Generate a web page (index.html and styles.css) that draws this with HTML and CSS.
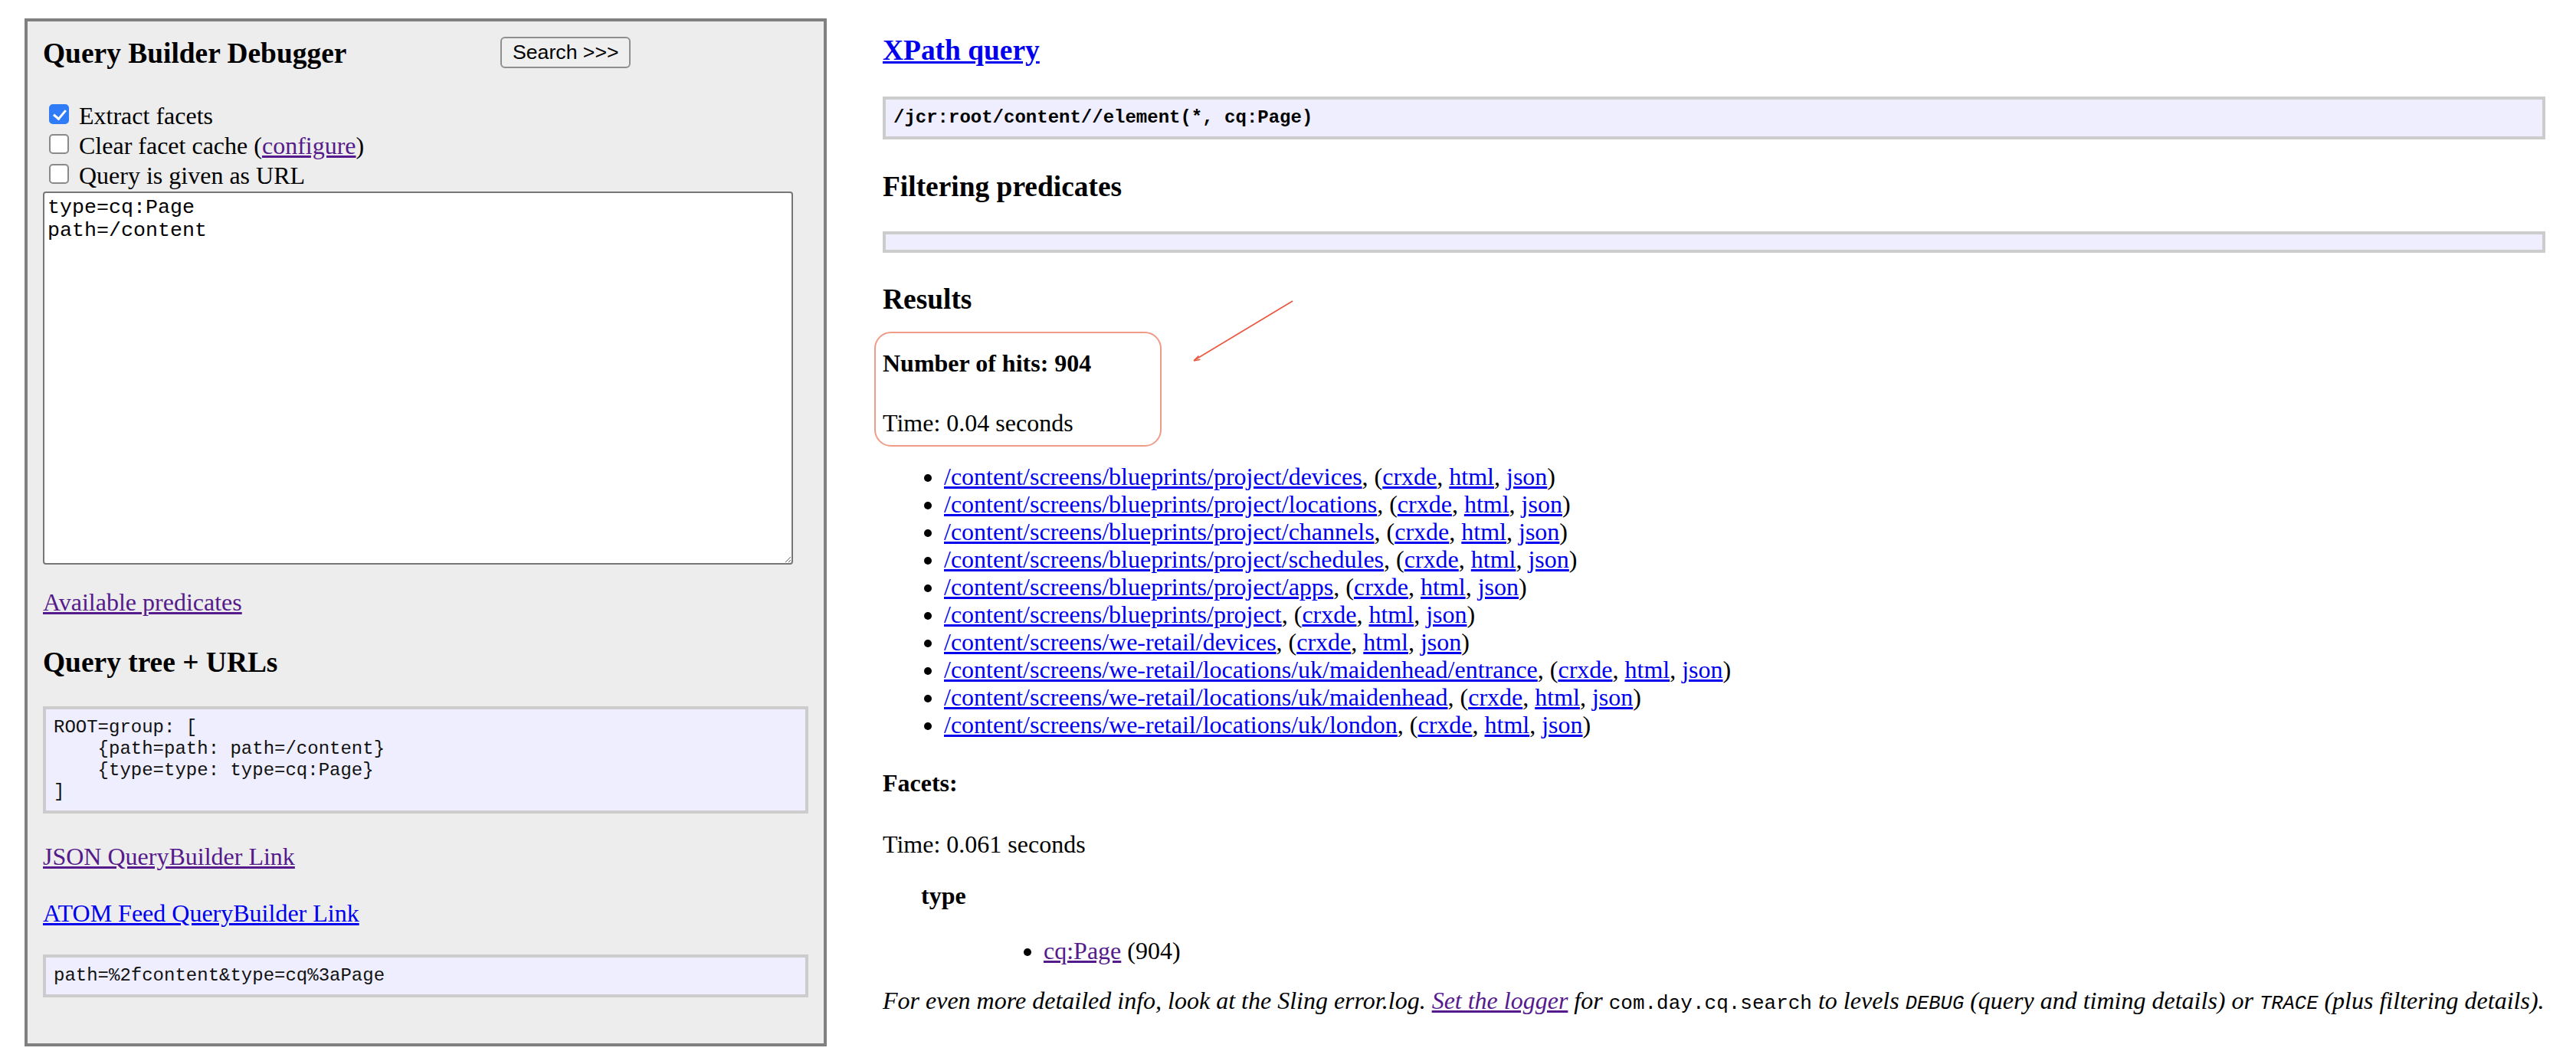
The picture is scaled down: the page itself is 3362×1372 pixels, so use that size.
FILE: index.html
```html
<!DOCTYPE html>
<html lang="en">
<head>
<meta charset="utf-8">
<title>Query Builder Debugger</title>
<link rel="stylesheet" href="styles.css">
</head>
<body>
<div class="page">
  <div class="panel">
    <div class="head">
      <h3 class="title">Query Builder Debugger</h3>
      <button class="search" type="button">Search &gt;&gt;&gt;</button>
    </div>
    <div class="opts">
      <label class="opt"><input type="checkbox" checked><span>Extract facets</span></label>
      <label class="opt"><input type="checkbox"><span>Clear facet cache (<a class="visited" href="#c">configure</a>)</span></label>
      <label class="opt"><input type="checkbox"><span>Query is given as URL</span></label>
    </div>
    <textarea class="query" spellcheck="false">type=cq:Page
path=/content</textarea>
    <p class="avail"><a class="visited" href="#p">Available predicates</a></p>
    <h3 class="tree-title">Query tree + URLs</h3>
    <pre class="box tree-box">ROOT=group: [
    {path=path: path=/content}
    {type=type: type=cq:Page}
]</pre>
    <p class="json"><a class="visited" href="#j">JSON QueryBuilder Link</a></p>
    <p class="atom"><a href="#a">ATOM Feed QueryBuilder Link</a></p>
    <pre class="box url-box">path=%2fcontent&amp;type=cq%3aPage</pre>
  </div>

  <div class="main">
    <h3 class="xpath-title"><a href="#x">XPath query</a></h3>
    <pre class="box xpath-box">/jcr:root/content//element(*, cq:Page)</pre>
    <h3 class="filter-title">Filtering predicates</h3>
    <pre class="box empty-box"></pre>
    <h3 class="results-title">Results</h3>
    <div class="hits-wrap">
      <h4 class="hits">Number of hits: 904</h4>
      <p class="time">Time: 0.04 seconds</p>
      <div class="mark"></div>
      <svg class="arrow" width="150" height="96" viewBox="0 0 150 96">
        <line x1="142" y1="7" x2="14" y2="84" stroke="#e9573f" stroke-width="1.6"/>
        <path d="M13 85 L19.5 78.5 M13 85 L21.5 83.2" stroke="#e9573f" stroke-width="1.6" fill="none"/>
      </svg>
    </div>
    <ul class="results">
      <li><a href="#r">/content/screens/blueprints/project/devices</a>, (<a href="#r">crxde</a>, <a href="#r">html</a>, <a href="#r">json</a>)</li>
      <li><a href="#r">/content/screens/blueprints/project/locations</a>, (<a href="#r">crxde</a>, <a href="#r">html</a>, <a href="#r">json</a>)</li>
      <li><a href="#r">/content/screens/blueprints/project/channels</a>, (<a href="#r">crxde</a>, <a href="#r">html</a>, <a href="#r">json</a>)</li>
      <li><a href="#r">/content/screens/blueprints/project/schedules</a>, (<a href="#r">crxde</a>, <a href="#r">html</a>, <a href="#r">json</a>)</li>
      <li><a href="#r">/content/screens/blueprints/project/apps</a>, (<a href="#r">crxde</a>, <a href="#r">html</a>, <a href="#r">json</a>)</li>
      <li><a href="#r">/content/screens/blueprints/project</a>, (<a href="#r">crxde</a>, <a href="#r">html</a>, <a href="#r">json</a>)</li>
      <li><a href="#r">/content/screens/we-retail/devices</a>, (<a href="#r">crxde</a>, <a href="#r">html</a>, <a href="#r">json</a>)</li>
      <li><a href="#r">/content/screens/we-retail/locations/uk/maidenhead/entrance</a>, (<a href="#r">crxde</a>, <a href="#r">html</a>, <a href="#r">json</a>)</li>
      <li><a href="#r">/content/screens/we-retail/locations/uk/maidenhead</a>, (<a href="#r">crxde</a>, <a href="#r">html</a>, <a href="#r">json</a>)</li>
      <li><a href="#r">/content/screens/we-retail/locations/uk/london</a>, (<a href="#r">crxde</a>, <a href="#r">html</a>, <a href="#r">json</a>)</li>
    </ul>
    <h4 class="facets">Facets:</h4>
    <p class="time2">Time: 0.061 seconds</p>
    <h4 class="facet-name">type</h4>
    <ul class="facet-list">
      <li><a class="visited" href="#f">cq:Page</a> (904)</li>
    </ul>
    <p class="note"><i>For even more detailed info, look at the Sling error.log. <a class="visited" href="#l">Set the logger</a> for <code class="pkg">com.day.cq.search</code> to levels <code class="lvl">DEBUG</code> (query and timing details) or <code class="lvl">TRACE</code> (plus filtering details).</i></p>
  </div>
</div>
</body>
</html>
```

FILE: styles.css
```css
* { box-sizing: border-box; }

html, body {
  margin: 0;
  padding: 0;
  background: #ffffff;
}

body {
  font-family: "Liberation Serif", "Times New Roman", serif;
  font-size: 32px;
  line-height: 36px;
  color: #000;
}

h3, h4, p, ul, pre { margin: 0; }

a { color: #0000ee; text-decoration: underline; }
a.visited { color: #551a8b; }

.page {
  display: flex;
  align-items: flex-start;
  padding: 24px 40px 0 32px;
  gap: 73px;
}

/* ---------- left panel ---------- */
.panel {
  flex: 0 0 1047px;
  background: #ededed;
  border: 4px solid #808080;
  padding: 20px 20px 60px 20px;
}

.head {
  display: flex;
  align-items: flex-start;
  height: 43px;
}

h3 {
  font-size: 37.44px;
  line-height: 43px;
  font-weight: bold;
}

.title {
  flex: 0 0 597px;
}

.search {
  height: 41px;
  padding: 0 13px 0 14px;
  font-family: "Liberation Sans", Arial, sans-serif;
  font-size: 26.67px;
  color: #000;
  background: #efefef;
  border: 2px solid #8f8f8f;
  border-radius: 6px;
}

.opts { margin-top: 42px; }

.opt {
  display: flex;
  align-items: flex-start;
  height: 39px;
}

.opt input {
  appearance: none;
  -webkit-appearance: none;
  flex: none;
  position: relative;
  width: 26px;
  height: 26px;
  margin: 3px 13px 0 8px;
  border: 2px solid #8a8a8a;
  border-radius: 5px;
  background: #ffffff;
}

.opt input:checked {
  background: #2f7cf6;
  border-color: #2f7cf6;
}

.opt input:checked::after {
  content: "";
  position: absolute;
  left: 7px;
  top: 2px;
  width: 7px;
  height: 13px;
  border: solid #ffffff;
  border-width: 0 3px 3px 0;
  transform: rotate(40deg);
}

.query {
  display: block;
  width: 979px;
  height: 487px;
  margin: 0;
  padding: 4px;
  border: 2px solid #767676;
  border-radius: 4px;
  background: #ffffff;
  font-family: "Liberation Mono", "Courier New", monospace;
  font-size: 26.67px;
  line-height: 30px;
  color: #000;
}

.avail { margin-top: 31px; }
.tree-title { margin-top: 39px; }

.box {
  background: #eeeeff;
  border: 4px solid #cccccc;
  padding: 10px;
  font-family: "Liberation Mono", "Courier New", monospace;
  font-size: 24px;
  line-height: 28px;
  color: #111;
  white-space: pre;
}

.tree-box { margin-top: 36px; }
.json { margin-top: 38px; }
.atom { margin-top: 38px; }
.url-box { margin-top: 36px; }

/* ---------- main column ---------- */
.main {
  flex: 1 1 auto;
  min-width: 0;
}

.xpath-title { margin-top: 20px; }
.xpath-box { margin-top: 39px; font-weight: bold; color: #000; }
.filter-title { margin-top: 40px; }
.empty-box { margin-top: 37px; }
.results-title { margin-top: 39px; }

h4 {
  font-size: 32px;
  line-height: 36px;
  font-weight: bold;
}

.hits-wrap {
  position: relative;
  margin-top: 44px;
}

.time { margin-top: 42px; }

.mark {
  position: absolute;
  left: -11px;
  top: -23px;
  width: 375px;
  height: 150px;
  border: 2px solid #f19a87;
  border-radius: 22px;
}

.arrow {
  position: absolute;
  left: 393px;
  top: -70px;
}

.results {
  margin-top: 34px;
  padding-left: 80px;
  list-style: disc;
}

.facets { margin-top: 40px; }
.time2 { margin-top: 44px; }
.facet-name { margin-top: 31px; margin-left: 50px; }

.facet-list {
  margin-top: 36px;
  padding-left: 210px;
  list-style: disc;
}

.note { margin-top: 29px; white-space: nowrap; }

.note code {
  font-family: "Liberation Mono", "Courier New", monospace;
  font-size: 26px;
}

.note .pkg { font-style: normal; }
.note .lvl { font-size: 25.5px; }
```
